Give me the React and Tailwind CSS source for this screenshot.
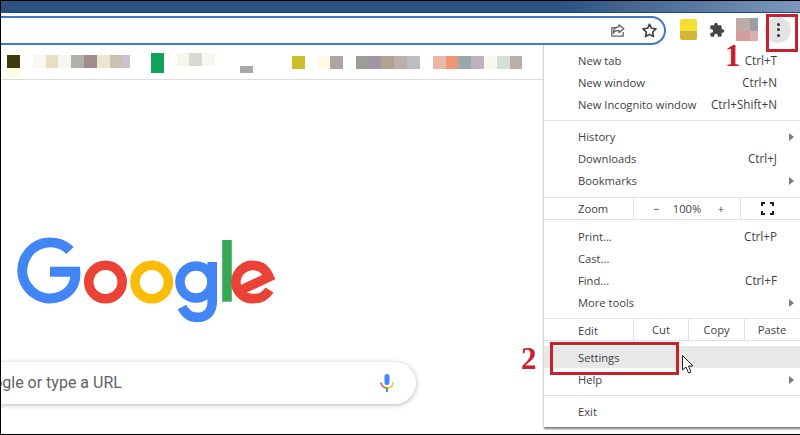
import React from "react";

const blocks = [
  [7, 13, "#403a0a", 55, 13],
  [33, 13, "#f8f8f0", 55, 13],
  [46, 12, "#e8dfc3", 55, 13],
  [58, 13, "#f6f6f0", 55, 13],
  [71, 13, "#b0b0aa", 55, 13],
  [84, 13, "#a28b90", 55, 13],
  [97, 13, "#ece6cf", 55, 13],
  [110, 12, "#c9c2ae", 55, 13],
  [122, 8, "#cfbfd3", 55, 13],
  [151, 13, "#12a35a", 53, 20],
  [177, 12, "#f6f5ec", 53, 13],
  [189, 13, "#d8d9d3", 53, 13],
  [202, 13, "#f9f6f2", 53, 13],
  [240, 13, "#aaa8ab", 66, 7],
  [292, 13, "#cdbd2b", 56, 13],
  [318, 12, "#fcfae6", 56, 13],
  [330, 13, "#ada4a3", 56, 13],
  [356, 13, "#9f9c98", 56, 13],
  [369, 12, "#a096a6", 56, 13],
  [381, 13, "#b1a592", 56, 13],
  [394, 13, "#bcaeaa", 56, 13],
  [407, 13, "#b9bfc3", 56, 13],
  [433, 13, "#e9b9a8", 56, 13],
  [446, 12, "#ef9772", 56, 13],
  [458, 13, "#9aa9ad", 56, 13],
  [471, 13, "#bfb1bd", 56, 13],
  [484, 13, "#f8f8f0", 56, 13],
  [497, 13, "#d6dcd6", 56, 13],
  [510, 12, "#bcaeaa", 56, 13],
];

function Bookmarks() {
  let cursor = 0;
  return (
    <div className="flex h-[34px] shrink-0 items-start border-b border-[#dcdcdc] bg-white">
      {blocks.map(([x, w, c, y, h], i) => {
        const ml = x - 1 - cursor;
        cursor = x - 1 + w;
        return (
          <div key={i} className="shrink-0" style={{ marginLeft: ml, width: w, height: h, marginTop: y - 46, background: c }}>
            {i === 0 && <div className="mt-[13px] h-[8px] w-full bg-[#fdfbe0]" />}
          </div>
        );
      })}
    </div>
  );
}

function Row({ label, hint, arrow, hover }) {
  return (
    <div className={`flex h-[22px] items-center pl-[34px] ${hover ? "bg-[#e8e8e9] pt-[1px]" : ""} ${arrow ? "pr-[7px]" : "pr-[24px]"}`}>
      <span className="flex-1">{label}</span>
      {hint && <span className="text-[11.7px]">{hint}</span>}
      {arrow && <span className="h-0 w-0 border-y-[4px] border-l-[5px] border-y-transparent border-l-[#7a7a7a]" />}
    </div>
  );
}

const Sep = ({ className }) => <div className={`h-px bg-[#e0e0e0] ${className}`} />;

function Menu() {
  return (
    <div className="absolute left-[542px] top-[44px] h-[382px] w-[258px] border-l border-[#d5d5d5] bg-white pt-[5px] font-['Open_Sans',sans-serif] text-[11.2px] leading-none text-[#3f3f3f] shadow-[1px_2px_2px_#777]">
      <Row label="New tab" hint="Ctrl+T" />
      <Row label="New window" hint="Ctrl+N" />
      <Row label="New Incognito window" hint="Ctrl+Shift+N" />
      <Sep className="mt-[4px] mb-[5px]" />
      <Row label="History" arrow />
      <Row label="Downloads" hint="Ctrl+J" />
      <Row label="Bookmarks" arrow />
      <div className="mt-[5px] flex h-[23px] items-center border-y border-[#e0e0e0] pl-[34px]">
        <span className="w-[55px] pt-[1px]">Zoom</span>
        <div className="flex h-full w-[108px] items-center border-x border-[#e0e0e0] pt-[1px]">
          <span className="w-[36px] pl-[9px] text-center">−</span>
          <span className="w-[36px] text-center">100%</span>
          <span className="w-[36px] pr-[3px] text-center">+</span>
        </div>
        <svg className="ml-[20px]" width="13" height="13" viewBox="0 0 13 13" fill="none" stroke="#222" strokeWidth="2">
          <path d="M1 4V1h3M9 1h3v3M12 9v3H9M4 12H1V9" />
        </svg>
      </div>
      <div className="mt-[6px]">
        <Row label="Print..." hint="Ctrl+P" />
        <Row label="Cast..." />
        <Row label="Find..." hint="Ctrl+F" />
        <Row label="More tools" arrow />
      </div>
      <div className="mt-[4px] flex h-[23px] items-center border-y border-[#e0e0e0] pl-[34px]">
        <span className="w-[55px] pt-[2px]">Edit</span>
        <span className="flex h-full w-[55px] items-center justify-center border-l border-[#e0e0e0] pt-[1px]">Cut</span>
        <span className="flex h-full w-[56px] items-center justify-center border-l border-[#e0e0e0] pt-[1px]">Copy</span>
        <span className="flex h-full w-[55px] items-center justify-center border-l border-[#e0e0e0] pt-[1px]">Paste</span>
      </div>
      <div className="mt-[5px]">
        <Row label="Settings" hover />
        <div className="pt-[1px]">
          <Row label="Help" arrow />
        </div>
      </div>
      <Sep className="mt-[4px] mb-[5px]" />
      <Row label="Exit" />
    </div>
  );
}

function Logo() {
  return (
    <svg width="262" height="88" viewBox="15 236 262 88" fill="none" strokeWidth="9.6" className="block">
      <path d="M70 250.5A28 28 0 1 0 49.7 298.4C66 298.4 76.5 287 75.3 271.8H50" stroke="#4285f4" strokeWidth="10" />
      <circle cx="105.5" cy="282" r="16.7" stroke="#ea4335" />
      <circle cx="151.7" cy="282" r="16.7" stroke="#fbbc05" />
      <circle cx="196" cy="282" r="16" stroke="#4285f4" />
      <path d="M212.2 262V302C212.2 312 206 317.4 197 317.4C189 317.4 184.5 312 182 307" stroke="#4285f4" />
      <path d="M227 240V301.7" stroke="#34a853" strokeWidth="9.6" />
      <path d="M241 290L269 277C265 268 260 265.6 254.7 265.6A16.6 16.6 0 1 0 254.7 298.5C261 298.5 266 295.5 269.5 290" stroke="#ea4335" />
    </svg>
  );
}

export default function App() {
  return (
    <div className="relative flex h-[435px] w-[800px] flex-col overflow-hidden border-b border-l border-t border-black bg-white font-['Liberation_Sans',sans-serif]">
      <div className="h-[11px] shrink-0 bg-gradient-to-r from-[#2c5282] via-[#2c5282] via-70% to-[#7c98bb]" />
      <div className="h-[1px] shrink-0 bg-[#26466f]" />
      <div className="flex h-[33px] shrink-0 items-center bg-white">
        <div className="mt-[3px] flex h-[29px] w-[665px] shrink-0 items-center justify-end gap-[15px] self-start rounded-r-[15px] border-y-2 border-r-2 border-[#3f78c6] bg-white pr-[6px]">
          <svg width="17" height="17" viewBox="0 0 24 24" fill="none" stroke="#5f6368" strokeWidth="1.8" strokeLinejoin="round">
            <path d="M20 14v6H4V8h6" />
            <path d="M14 4l7 5.5-7 5.5v-3.2c-4 0-6.5 1.4-8 4.2 0-5 2.6-8.8 8-9.2z" />
          </svg>
          <svg width="17" height="17" viewBox="0 0 24 24" fill="none" stroke="#3c4043" strokeWidth="2.2" strokeLinejoin="round">
            <path d="M12 3l2.8 5.9 6.4.8-4.7 4.4 1.2 6.4L12 17.4l-5.7 3.1 1.2-6.4L2.8 9.7l6.4-.8z" />
          </svg>
        </div>
        <div className="ml-[14px] flex h-[21px] w-[17px] flex-col overflow-hidden rounded-[2px]">
          <div className="h-[12px] bg-[#f7dc34]" />
          <div className="flex-1 bg-[#d6b438]" />
        </div>
        <svg className="ml-[12px]" width="16" height="16" viewBox="0 0 24 24" fill="#444746">
          <path d="M20.5 11H19V7c0-1.1-.9-2-2-2h-4V3.5C13 2.12 11.88 1 10.5 1S8 2.12 8 3.5V5H4c-1.1 0-1.99.9-1.99 2v3.8H3.5c1.49 0 2.7 1.21 2.7 2.7s-1.21 2.7-2.7 2.7H2V20c0 1.1.9 2 2 2h3.8v-1.5c0-1.49 1.21-2.7 2.7-2.7 1.49 0 2.7 1.21 2.7 2.7V22H17c1.1 0 2-.9 2-2v-4h1.5c1.38 0 2.5-1.12 2.5-2.5S21.88 11 20.5 11z" />
        </svg>
        <div className="ml-[11px] grid h-[23px] w-[22px] grid-cols-[14px_8px] grid-rows-[13px_10px]">
          <div className="bg-[#bcaba6]" />
          <div className="bg-[#9d9ca7]" />
          <div className="bg-[#d69b9c]" />
          <div className="bg-[#dcb0ae]" />
        </div>
        <div className="ml-[7px] flex h-[26px] w-[26px] flex-col items-center justify-center gap-[2.5px] rounded-full bg-[#e3e3e3]">
          <span className="h-[3px] w-[3px] rounded-full bg-[#333]" />
          <span className="h-[3px] w-[3px] rounded-full bg-[#333]" />
          <span className="h-[3px] w-[3px] rounded-full bg-[#333]" />
        </div>
      </div>
      <Bookmarks />
      <div className="flex-1 bg-white pl-[14px] pt-[156px]">
        <Logo />
        <div className="-ml-[115px] mt-[38px] flex h-[42px] w-[516px] items-center justify-between rounded-full bg-white pl-[20px] pr-[22px] font-['Roboto',sans-serif] text-[16px] text-[#5f6368] shadow-[0_1px_5px_rgba(60,64,67,0.4)]">
          <span>Search Google or type a URL</span>
          <svg width="14" height="18" viewBox="0 0 14 18" fill="none">
            <rect x="4.5" y="0" width="5" height="11" rx="2.5" fill="#4285f4" />
            <path d="M1 8.5a6 6 0 0 0 6 5.5" stroke="#ea4335" strokeWidth="1.6" />
            <path d="M13 8.5a6 6 0 0 1-6 5.5" stroke="#fbbc05" strokeWidth="1.6" />
            <path d="M7 14v4" stroke="#34a853" strokeWidth="1.8" />
          </svg>
        </div>
      </div>

      <Menu />

      <div className="absolute left-[765px] top-[13px] h-[38px] w-[32px] border-[3px] border-[#c9202e]" />
      <div className="absolute left-[549px] top-[341px] h-[33px] w-[129px] border-[3px] border-[#c9202e]" />
      <span className="absolute left-[724px] top-[39px] font-['Liberation_Serif',serif] text-[31px] font-bold leading-[32px] text-[#c9202e]">1</span>
      <span className="absolute left-[520px] top-[342px] font-['Liberation_Serif',serif] text-[31px] font-bold leading-[32px] text-[#c9202e]">2</span>
      <svg className="absolute left-[680px] top-[353px]" width="15" height="21" viewBox="0 0 15 21" fill="#fff" stroke="#222" strokeWidth="1">
        <path d="M1.5 1.5V16l3.5-3 2.5 6 2.5-1-2.5-6h4.5z" />
      </svg>
    </div>
  );
}
